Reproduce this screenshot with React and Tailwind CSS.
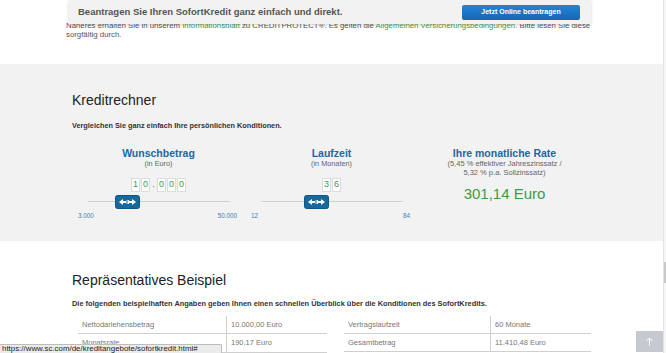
// Kreditrechner section of the SofortKredit page

function DigitBoxes({ parts }) {
  return (
    <div className="flex items-center gap-px">
      {parts.map((p, i) =>
        p === "." ? (
          <span key={i} className="w-[5px] text-center text-[9px] text-[#3a9c46]">
            .
          </span>
        ) : (
          <span
            key={i}
            className="w-[9px] h-[14px] flex items-center justify-center bg-white border border-[#dcdcdc] text-[9px] text-[#3a9c46]"
          >
            {p}
          </span>
        )
      )}
    </div>
  );
}

function Handle() {
  return (
    <svg width="25" height="14" viewBox="0 0 25 14">
      <rect x="0.5" y="0.5" width="24" height="13" rx="2" fill="#17699c" stroke="#0e5583" />
      <polygon points="4,7 8,4 8,10" fill="#fff" />
      <rect x="8" y="6" width="3" height="2" fill="#fff" />
      <rect x="11.6" y="5" width="0.9" height="4" fill="#fff" />
      <rect x="13.1" y="5" width="0.9" height="4" fill="#fff" />
      <rect x="14" y="6" width="3" height="2" fill="#fff" />
      <polygon points="21,7 17,4 17,10" fill="#fff" />
    </svg>
  );
}

function SliderColumn({ title, sub, parts, handleLeft, min, max }) {
  return (
    <div className="w-[173px] flex flex-col items-center">
      <h3 className="text-[10.5px] leading-[12px] font-bold text-[#1b68a3]">{title}</h3>
      <p className="text-[7.3px] leading-[9px] text-[#666]">{sub}</p>
      <div className="mt-[10px]">
        <DigitBoxes parts={parts} />
      </div>
      {/* SLIDER */}
      <div className="mt-[3px] w-[142px] h-[14px] relative flex items-center">
        <div className="w-full h-px bg-[#cfcfcf]" />
        <div className="absolute top-0" style={{ left: handleLeft }}>
          <Handle />
        </div>
      </div>
      <div className="mt-[3px] w-full flex justify-between pl-[6px] pr-[8px] text-[6.3px] leading-[8px] text-[#3d80b3]">
        <span>{min}</span>
        <span>{max}</span>
      </div>
    </div>
  );
}

function Row({ label, value, last }) {
  return (
    <div className={`flex h-[18px] items-center text-[7.5px] text-[#777] ${last ? "" : "border-b border-[#cfcfcf]"}`}>
      <div className="flex-1 h-full flex items-center pl-[4px] border-r border-[#cfcfcf]">{label}</div>
      <div className="w-[100px] pl-[4px]">{value}</div>
    </div>
  );
}

export default function App() {
  return (
    <div className="w-[666px] h-[353px] overflow-hidden relative flex bg-white font-['Liberation_Sans',Arial,sans-serif]">
      <div className="w-[663px] flex flex-col">
        {/* TOP NOTE */}
        <div className="h-[64px] pt-[21px] pl-[66px] pr-[66px] text-[7.8px] leading-[9px] text-[#555]">
          Näheres erhalten Sie in unserem <span className="text-[#4a9c4a]">Informationsblatt</span> zu
          CREDITPROTECT®. Es gelten die{" "}
          <span className="text-[#4a9c4a]">Allgemeinen Versicherungsbedingungen</span>. Bitte lesen Sie diese
          sorgfältig durch.
        </div>

        {/* KREDITRECHNER */}
        <section className="h-[179px] bg-[#f2f2f2] pl-[72px] pt-[28px]">
          <h2 className="text-[14px] leading-[16px] text-[#222]">Kreditrechner</h2>
          <p className="mt-[13px] text-[7.3px] leading-[10px] font-bold text-[#333]">
            Vergleichen Sie ganz einfach Ihre persönlichen Konditionen.
          </p>

          <div className="mt-[16px] flex">
            <SliderColumn
              title="Wunschbetrag"
              sub="(in Euro)"
              parts={["1", "0", ".", "0", "0", "0"]}
              handleLeft={27}
              min="3.000"
              max="50.000"
            />
            <SliderColumn
              title="Laufzeit"
              sub="(in Monaten)"
              parts={["3", "6"]}
              handleLeft={43}
              min="12"
              max="84"
            />
            <div className="w-[173px] flex flex-col items-center text-center">
              <h3 className="text-[10.5px] leading-[12px] font-bold text-[#1b68a3]">Ihre monatliche Rate</h3>
              <p className="text-[7.5px] leading-[9px] text-[#666]">
                (5,45 % effektiver Jahreszinssatz /
                <br />
                5,32 % p.a. Sollzinssatz)
              </p>
              <p className="mt-[8px] text-[15px] leading-[17px] text-[#3a9c46]">301,14 Euro</p>
            </div>
          </div>
        </section>

        {/* BEISPIEL */}
        <section className="flex-1 pl-[72px] pt-[31px]">
          <h2 className="text-[14px] leading-[16px] text-[#222]">Repräsentatives Beispiel</h2>
          <p className="mt-[11px] text-[7.4px] leading-[10px] font-bold text-[#333]">
            Die folgenden beispielhaften Angaben geben Ihnen einen schnellen Überblick über die Konditionen des
            SofortKredits.
          </p>
          <div className="mt-[7px] ml-[6px] flex gap-[17px]">
            <div className="w-[249px] border-b border-[#cfcfcf]">
              <Row label="Nettodarlehensbetrag" value="10.000,00 Euro" />
              <Row label="Monatsrate" value="190,17 Euro" last />
            </div>
            <div className="w-[247px]">
              <Row label="Vertragslaufzeit" value="60 Monate" />
              <Row label="Gesamtbetrag" value="11.410,48 Euro" />
            </div>
          </div>
        </section>
      </div>

      {/* SCROLLBAR */}
      <div className="w-[3px] bg-[#f6f6f6] border-l border-[#e3e3e3] pt-[262px]">
        <div className="h-[21px] w-[2px] bg-[#c9c9c9]" />
      </div>

      {/* STICKY BAR */}
      <div className="absolute left-[69px] top-0 w-[522px] h-[24px] bg-[#f2f2f2] shadow-[0_1px_3px_rgba(0,0,0,0.18)] flex items-center justify-between pl-[9px] pr-[11px]">
        <span className="text-[9.5px] font-bold text-[#555]">
          Beantragen Sie Ihren SofortKredit ganz einfach und direkt.
        </span>
        <button className="w-[118px] h-[15px] rounded-[2px] bg-linear-to-b from-[#2385d8] to-[#1566b4] text-white text-[7px] font-bold">
          Jetzt Online beantragen
        </button>
      </div>

      {/* BACK TO TOP */}
      <div className="absolute left-[636px] top-[331px] w-[27px] h-[21px] bg-[#c4cad0] flex items-center justify-center">
        <svg width="9" height="9" viewBox="0 0 9 9" fill="none" stroke="#fff" strokeWidth="1">
          <path d="M4.5 8.5V1M1.5 4L4.5 1L7.5 4" />
        </svg>
      </div>

      {/* STATUS BUBBLE */}
      <div className="absolute left-0 bottom-0 w-[222px] h-[9px] bg-[#ebebeb] border-t border-r border-[#bdbdbd] rounded-tr-[2px] pl-[2px] text-[7.9px] leading-[8px] text-[#222]">
        https://www.sc.com/de/kreditangebote/sofortkredit.html#
      </div>
    </div>
  );
}
